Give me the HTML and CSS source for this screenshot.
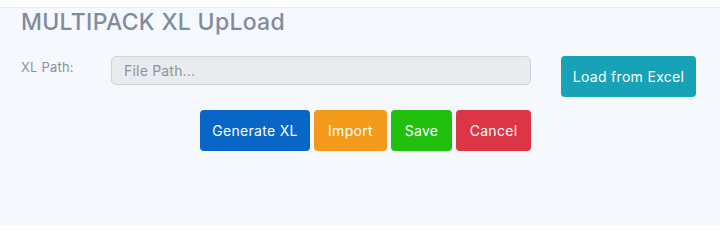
FILE: index.html
```html
<!DOCTYPE html>
<html lang="en">
<head>
<meta charset="utf-8">
<title>MULTIPACK XL UpLoad</title>
<link rel="stylesheet" href="styles.css">
</head>
<body>
<div class="topbar"></div>
<section class="panel">
  <h1 class="title">MULTIPACK XL UpLoad</h1>
  <div class="form-row">
    <label class="label" for="xlpath">XL Path:</label>
    <input class="input" id="xlpath" type="text" placeholder="File Path..." readonly>
    <button class="btn btn-info btn-load">Load from Excel</button>
  </div>
  <div class="actions">
    <button class="btn btn-primary btn-generate">Generate XL</button>
    <button class="btn btn-warning btn-import">Import</button>
    <button class="btn btn-success btn-save">Save</button>
    <button class="btn btn-danger btn-cancel">Cancel</button>
  </div>
</section>
</body>
</html>
```
FILE: styles.css
```css
html, body {
  margin: 0;
  padding: 0;
  background: #ffffff;
  font-family: Inter, "Open Sans", "Liberation Sans", sans-serif;
}
.topbar {
  height: 7px;
  background: #ffffff;
  border-bottom: 1px solid #e8ebf0;
}
.panel {
  background: #f5f8fd;
  height: 217px;
  padding: 0 0 0 21px;
  box-sizing: border-box;
}
.title {
  margin: 0;
  font-size: 23px;
  line-height: 28px;
  font-weight: 500;
  color: #828b9e;
  letter-spacing: 0.3px;
}
.form-row {
  display: flex;
  align-items: flex-start;
  margin-top: 20px;
}
.label {
  width: 90px;
  flex: none;
  font-size: 13px;
  line-height: 19px;
  padding-top: 2px;
  color: #8b919b;
  letter-spacing: 0.2px;
}
.input {
  width: 420px;
  height: 29px;
  box-sizing: border-box;
  border: 1px solid #ced4da;
  border-radius: 5px;
  background: #e9ecef;
  padding: 0 12px;
  font-family: inherit;
  font-size: 14px;
  color: #495057;
  outline: none;
}
.input::placeholder {
  color: #8d939c;
  letter-spacing: 0.2px;
}
.btn {
  height: 41px;
  border: none;
  border-radius: 4px;
  padding: 0;
  font-family: inherit;
  font-size: 14px;
  color: #ffffff;
  letter-spacing: 0.3px;
  cursor: pointer;
}
.btn-load {
  margin-left: 30px;
  width: 135px;
}
.btn-generate { width: 110px; }
.btn-import { width: 73px; }
.btn-save { width: 61px; }
.btn-cancel { width: 75px; }
.btn-info { background: #17a2b8; }
.btn-primary { background: #0866c6; }
.btn-warning { background: #f49a1b; }
.btn-success { background: #22c00e; }
.btn-danger { background: #dc3545; }
.actions {
  display: flex;
  justify-content: flex-end;
  gap: 4px;
  width: 510px;
  margin-top: 13px;
}
```
